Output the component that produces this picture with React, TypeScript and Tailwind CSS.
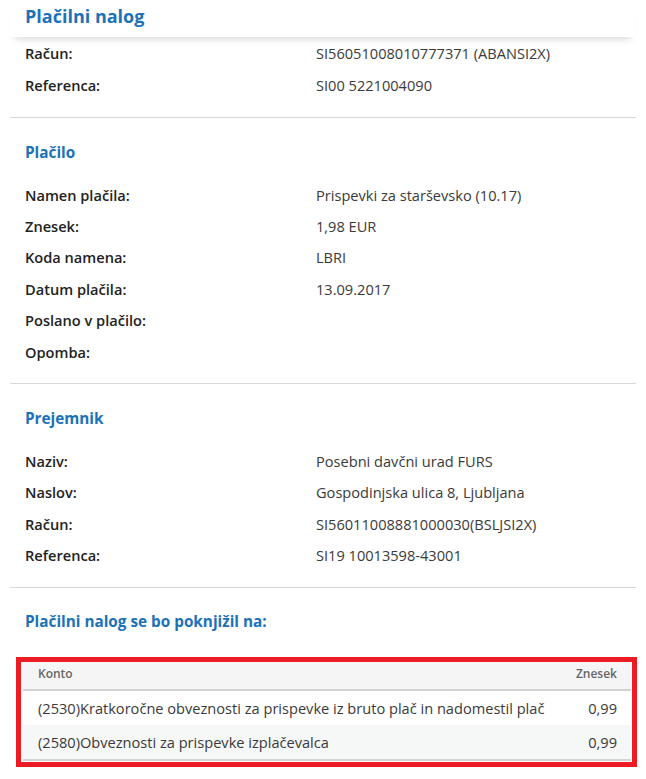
import React from "react";

const font = { fontFamily: '"Open Sans", "Liberation Sans", sans-serif' };

function Row({ label, value, h = "h-[31.4px]" }: { label: string; value?: string; h?: string }) {
  return (
    <div className={`flex items-center ${h} text-[14.6px] leading-[20px]`}>
      <div className="w-[291px] font-semibold text-[#222]">{label}</div>
      <div className="text-[#3a3a3a]">{value}</div>
    </div>
  );
}

function Section({
  title,
  rows,
}: {
  title: string;
  rows: { label: string; value?: string }[];
}) {
  return (
    <div className="mx-[10px] border-t border-[#d8d8d8] px-[15px] pt-[24px] pb-[16px]">
      <h2 className="text-[15.3px] leading-[20px] font-bold text-[#1b72b8]">{title}</h2>
      <div className="mt-[17px]">
        {rows.map((r) => (
          <Row key={r.label} label={r.label} value={r.value} />
        ))}
      </div>
    </div>
  );
}

export default function App() {
  return (
    <div className="w-[646px] h-[779px] bg-white overflow-hidden" style={font}>
      <div className="relative z-10 mx-[10px] h-[37px] px-[15px] flex items-center bg-white shadow-[0_7px_7px_-5px_rgba(0,0,0,0.16)]">
        <h1 className="text-[18px] leading-[24px] font-bold text-[#1b72b8] -mt-[5px]">Plačilni nalog</h1>
      </div>
      <div className="mx-[10px] px-[15px] pb-[16px]">
        <Row label="Račun:" value="SI56051008010777371 (ABANSI2X)" h="h-[32px]" />
        <Row label="Referenca:" value="SI00 5221004090" h="h-[32px]" />
      </div>

      <Section
        title="Plačilo"
        rows={[
          { label: "Namen plačila:", value: "Prispevki za starševsko (10.17)" },
          { label: "Znesek:", value: "1,98 EUR" },
          { label: "Koda namena:", value: "LBRI" },
          { label: "Datum plačila:", value: "13.09.2017" },
          { label: "Poslano v plačilo:" },
          { label: "Opomba:" },
        ]}
      />

      <Section
        title="Prejemnik"
        rows={[
          { label: "Naziv:", value: "Posebni davčni urad FURS" },
          { label: "Naslov:", value: "Gospodinjska ulica 8, Ljubljana" },
          { label: "Račun:", value: "SI56011008881000030(BSLJSI2X)" },
          { label: "Referenca:", value: "SI19 10013598-43001" },
        ]}
      />

      <div className="mx-[10px] border-t border-[#d8d8d8] px-[15px] pt-[23px] pb-[26px]">
        <h2 className="text-[15.3px] leading-[20px] font-bold text-[#1b72b8]">
          Plačilni nalog se bo poknjižil na:
        </h2>
      </div>

      <div className="ml-[16px] w-[621px] border-[5px] border-[#ed1c24] pl-[2px] pr-[1px] pb-[1px]">
        <div className="text-[14.6px] leading-[20px]">
          <div className="flex justify-between h-[29px] pt-[4px] pl-[15px] pr-[14px] bg-[#f5f5f5] text-[12px] leading-[16px] text-[#666] font-semibold border-b-2 border-[#d3d3d3]">
            <span>Konto</span>
            <span>Znesek</span>
          </div>
          <div className="flex items-center justify-between h-[34px] pl-[15px] pr-[14px] text-[#3a3a3a]">
            <span>(2530)Kratkoročne obveznosti za prispevke iz bruto plač in nadomestil plač</span>
            <span>0,99</span>
          </div>
          <div className="flex items-center justify-between h-[36px] pl-[15px] pr-[14px] bg-[#f6f7f7] text-[#3a3a3a] border-b-2 border-[#d3d3d3]">
            <span>(2580)Obveznosti za prispevke izplačevalca</span>
            <span>0,99</span>
          </div>
        </div>
      </div>
    </div>
  );
}
